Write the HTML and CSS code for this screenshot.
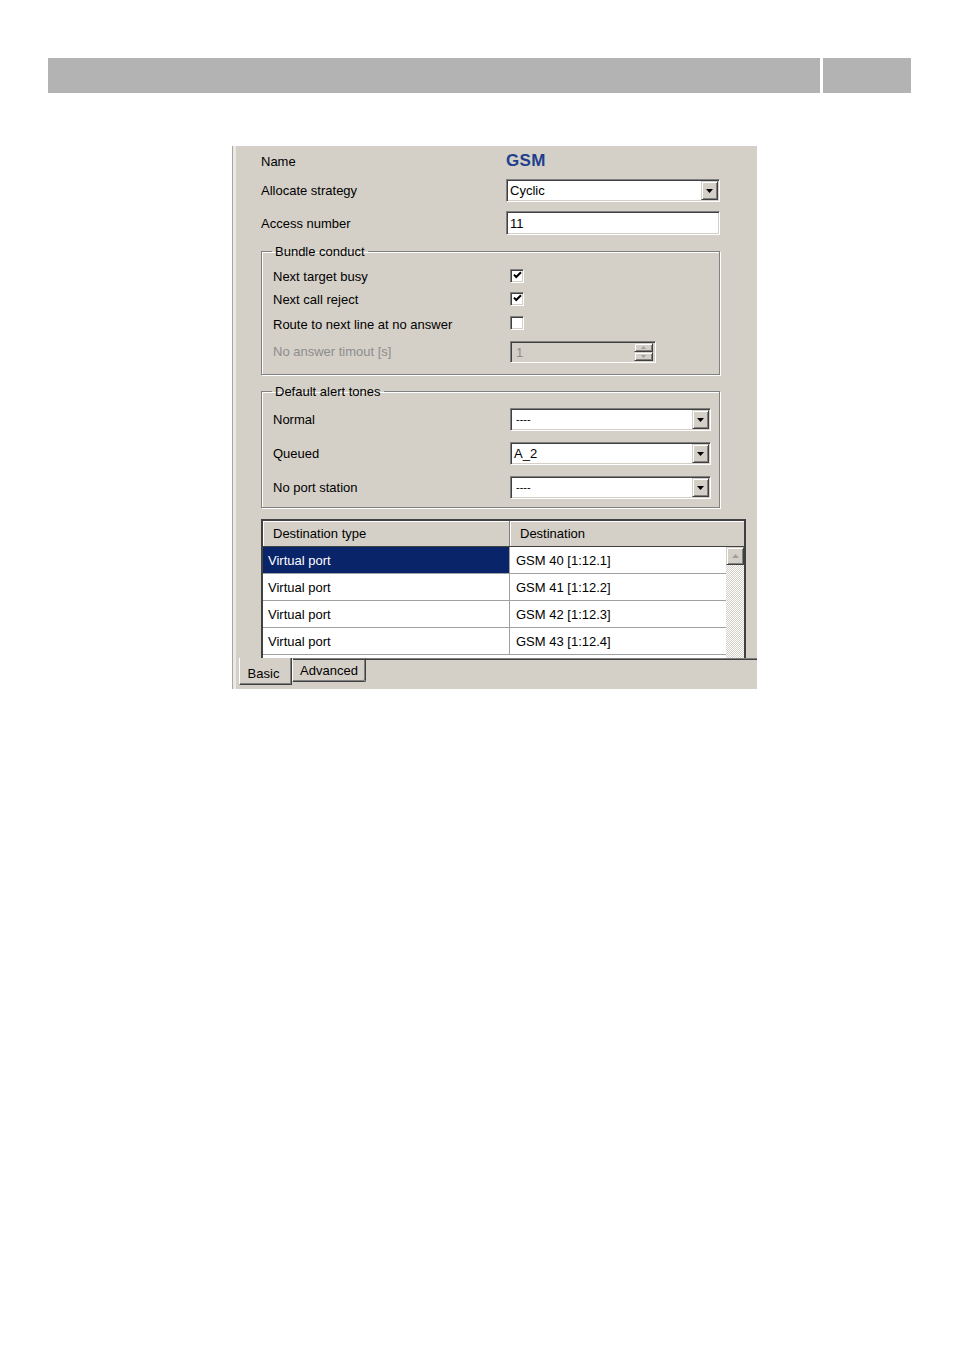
FILE: index.html
```
<!DOCTYPE html>
<html>
<head>
<meta charset="utf-8">
<link rel="stylesheet" href="styles.css">
</head>
<body>
<div class="topbar"><div class="bar-main"></div><div class="bar-side"></div></div>

<div class="panel">
  <div class="form">
    <div class="row r-name"><span class="lbl">Name</span><span class="gsm">GSM</span></div>
    <div class="row r-alloc"><span class="lbl">Allocate strategy</span>
      <div class="combo wide"><span class="val">Cyclic</span><span class="drop"><svg width="7" height="4" viewBox="0 0 7 4"><polygon points="0,0 7,0 3.5,4" fill="#000"/></svg></span></div>
    </div>
    <div class="row r-access"><span class="lbl">Access number</span>
      <div class="textbox wide"><span class="val">11</span></div>
    </div>

    <fieldset class="group g1">
      <legend>Bundle conduct</legend>
      <div class="gbody">
        <div class="row h23"><span class="glbl">Next target busy</span><span class="check"><svg width="9" height="9" viewBox="0 0 9 9"><path d="M1 3.6 L3.2 6 L8 1.2" stroke="#000" stroke-width="2" fill="none"/></svg></span></div>
        <div class="row h23"><span class="glbl">Next call reject</span><span class="check"><svg width="9" height="9" viewBox="0 0 9 9"><path d="M1 3.6 L3.2 6 L8 1.2" stroke="#000" stroke-width="2" fill="none"/></svg></span></div>
        <div class="row h26"><span class="glbl">Route to next line at no answer</span><span class="check"></span></div>
        <div class="row h28"><span class="glbl disabled">No answer timout [s]</span>
          <div class="spin"><span class="val disabled">1</span>
            <span class="spinbtns">
              <span class="sbtn"><svg width="5" height="3" viewBox="0 0 5 3"><polygon points="2.5,0 5,3 0,3" fill="#a0a0a0"/></svg></span>
              <span class="sbtn"><svg width="5" height="3" viewBox="0 0 5 3"><polygon points="0,0 5,0 2.5,3" fill="#a0a0a0"/></svg></span>
            </span>
          </div>
        </div>
      </div>
    </fieldset>

    <fieldset class="group g2">
      <legend>Default alert tones</legend>
      <div class="gbody">
        <div class="row h23"><span class="glbl">Normal</span>
          <div class="combo narrow"><span class="val dash">----</span><span class="drop"><svg width="7" height="4" viewBox="0 0 7 4"><polygon points="0,0 7,0 3.5,4" fill="#000"/></svg></span></div>
        </div>
        <div class="row h23 gap"><span class="glbl">Queued</span>
          <div class="combo narrow"><span class="val">A_2</span><span class="drop"><svg width="7" height="4" viewBox="0 0 7 4"><polygon points="0,0 7,0 3.5,4" fill="#000"/></svg></span></div>
        </div>
        <div class="row h23 gap"><span class="glbl">No port station</span>
          <div class="combo narrow"><span class="val dash">----</span><span class="drop"><svg width="7" height="4" viewBox="0 0 7 4"><polygon points="0,0 7,0 3.5,4" fill="#000"/></svg></span></div>
        </div>
      </div>
    </fieldset>

    <div class="table">
      <div class="thead">
        <div class="th c1">Destination type</div>
        <div class="th c2">Destination</div>
      </div>
      <div class="tbody">
        <div class="rows">
          <div class="tr"><div class="td c1 sel">Virtual port</div><div class="td c2">GSM 40 [1:12.1]</div></div>
          <div class="tr"><div class="td c1">Virtual port</div><div class="td c2">GSM 41 [1:12.2]</div></div>
          <div class="tr"><div class="td c1">Virtual port</div><div class="td c2">GSM 42 [1:12.3]</div></div>
          <div class="tr"><div class="td c1">Virtual port</div><div class="td c2">GSM 43 [1:12.4]</div></div>
        </div>
        <div class="scrollbar">
          <div class="sup"><svg width="7" height="4" viewBox="0 0 7 4"><polygon points="3.5,0 7,4 0,4" fill="#a0a0a0"/></svg></div>
          <div class="track"></div>
        </div>
      </div>
    </div>
  </div>

  <div class="tabs">
    <div class="tab-gap"></div>
    <div class="tab basic">Basic</div>
    <div class="tab adv">Advanced</div>
    <div class="tab-fill"></div>
  </div>
</div>
</body>
</html>
```
FILE: styles.css
```
* { box-sizing: border-box; }
body {
  margin: 0;
  background: #fff;
  font-family: "Liberation Sans", Arial, sans-serif;
  font-size: 13px;
  color: #000;
}
.topbar {
  display: flex;
  gap: 3px;
  margin: 58px 0 0 48px;
  height: 35px;
}
.bar-main { width: 772px; background: #b3b3b3; }
.bar-side { width: 88px; background: #b3b3b3; }

.panel {
  margin: 53px 0 0 232px;
  width: 525px;
  height: 543px;
  background: #d4d0c8;
  border-left: 1px solid #a8a7a3;
  box-shadow: inset 3px 0 0 #ebe9e5;
  display: flex;
  flex-direction: column;
}
.form {
  padding: 4px 0 0 28px;
  height: 512px;
}
.row { display: flex; align-items: center; }
.lbl { width: 245px; }
.glbl { width: 237px; }
.disabled { color: #8d8d8d; }
.r-name { height: 22px; }
.r-alloc { margin-top: 7px; height: 23px; }
.r-access { margin-top: 9px; height: 24px; }
.h23 { height: 23px; }
.h26 { height: 26px; }
.h28 { height: 28px; }
.gap { margin-top: 11px; }

.gsm {
  font-weight: bold;
  font-size: 17px;
  color: #1e3f8e;
  letter-spacing: 0.4px;
  margin-top: -1px;
}

.combo, .textbox, .spin {
  display: flex;
  align-items: center;
  background: #fff;
  border-style: solid;
  border-width: 1px;
  border-color: #808080 #fff #fff #808080;
  box-shadow: inset 1px 1px 0 #404040, inset -1px -1px 0 #d4d0c8;
  padding: 1px;
}
.combo { height: 23px; }
.textbox { height: 24px; padding: 2px; }
.wide { width: 214px; }
.narrow { width: 201px; }
.val { flex: 1; padding-left: 2px; line-height: 17px; }
.textbox .val { padding-left: 1px; }
.val.dash { padding-left: 4px; font-size: 11px; }
.drop {
  width: 17px;
  height: 19px;
  display: flex;
  align-items: center;
  justify-content: center;
  background: #d4d0c8;
  border: 1px solid;
  border-color: #d4d0c8 #404040 #404040 #d4d0c8;
  box-shadow: inset 1px 1px 0 #fff, inset -1px -1px 0 #808080;
}
.drop svg { margin-top: 1px; }

.check {
  width: 14px;
  height: 14px;
  background: #fff;
  border: 1px solid;
  border-color: #808080 #fff #fff #808080;
  box-shadow: inset 1px 1px 0 #404040, inset -1px -1px 0 #d4d0c8;
  display: flex;
  align-items: center;
  justify-content: center;
  margin-top: -2px;
}

.spin {
  width: 146px;
  height: 22px;
  background: #d4d0c8;
  margin-top: 2px;
  padding: 2px;
}
.spin .val { padding-left: 3px; }
.spinbtns {
  display: flex;
  flex-direction: column;
  width: 19px;
  height: 18px;
}
.sbtn {
  flex: 1;
  display: flex;
  align-items: center;
  justify-content: center;
  border: 1px solid;
  border-color: #d4d0c8 #404040 #404040 #d4d0c8;
  box-shadow: inset 1px 1px 0 #fff, inset -1px -1px 0 #808080;
}

.group {
  margin: 9px 0 0 0;
  padding: 0;
  width: 459px;
  border: 1px solid #808080;
  box-shadow: inset 1px 1px 0 #fff, 1px 1px 0 #fff;
}
.group legend {
  margin-left: 10px;
  padding: 0 3px;
  line-height: 15px;
}
.g1 .gbody { padding: 6px 0 9px 11px; }
.g2 { margin-top: 9px; }
.g2 .gbody { padding: 9px 0 8px 11px; }

.table {
  margin-top: 11px;
  width: 485px;
  background: #fff;
  border-style: solid;
  border-width: 2px 2px 0 2px;
  border-color: #404040;
}
.thead {
  display: flex;
  height: 26px;
  background: #d4d0c8;
  border-bottom: 1px solid #404040;
}
.th {
  display: flex;
  align-items: center;
  padding-left: 10px;
  border-right: 1px solid #808080;
  box-shadow: inset 1px 1px 0 #fff;
}
.th.c1 { width: 247px; }
.th.c2 { flex: 1; padding-left: 10px; border-right: 0; }
.tbody {
  display: flex;
  height: 112px;
}
.rows { width: 463px; }
.tr {
  display: flex;
  height: 27px;
  border-bottom: 1px solid #a0a0a0;
}
.td { display: flex; align-items: center; }
.td.c1 { width: 247px; padding-left: 5px; border-right: 1px solid #a0a0a0; }
.td.c2 { flex: 1; padding-left: 6px; }
.td.sel { background: #0a246a; color: #fff; }

.scrollbar {
  width: 18px;
  display: flex;
  flex-direction: column;
}
.sup {
  height: 18px;
  display: flex;
  align-items: center;
  justify-content: center;
  background: #d4d0c8;
  border: 1px solid;
  border-color: #d4d0c8 #404040 #404040 #d4d0c8;
  box-shadow: inset 1px 1px 0 #fff, inset -1px -1px 0 #808080;
}
.track {
  flex: 1;
  background-color: #d4d0c8;
  background-image: repeating-conic-gradient(#fff 0 25%, #d4d0c8 0 50%);
  background-size: 2px 2px;
}

.tabs {
  display: flex;
  height: 31px;
  align-items: flex-start;
}
.tab-gap { width: 6px; height: 31px; }
.tab {
  display: flex;
  align-items: center;
  justify-content: center;
  background: #d4d0c8;
}
.tab.basic {
  width: 53px;
  height: 27px;
  padding-top: 4px;
  padding-right: 4px;
  border-left: 1px solid #fff;
  border-right: 1px solid #404040;
  border-bottom: 1px solid #404040;
  box-shadow: inset -1px -1px 0 #808080;
}
.tab.adv {
  width: 74px;
  height: 24px;
  border-top: 1px solid #808080;
  box-shadow: inset 0 1px 0 #404040, inset -1px -1px 0 #808080;
  border-left: 1px solid #fff;
  border-right: 1px solid #404040;
  border-bottom: 1px solid #404040;
  border-bottom-right-radius: 2px;
}
.tab-fill {
  flex: 1;
  height: 2px;
  border-top: 1px solid #808080;
  border-bottom: 1px solid #404040;
}
```
